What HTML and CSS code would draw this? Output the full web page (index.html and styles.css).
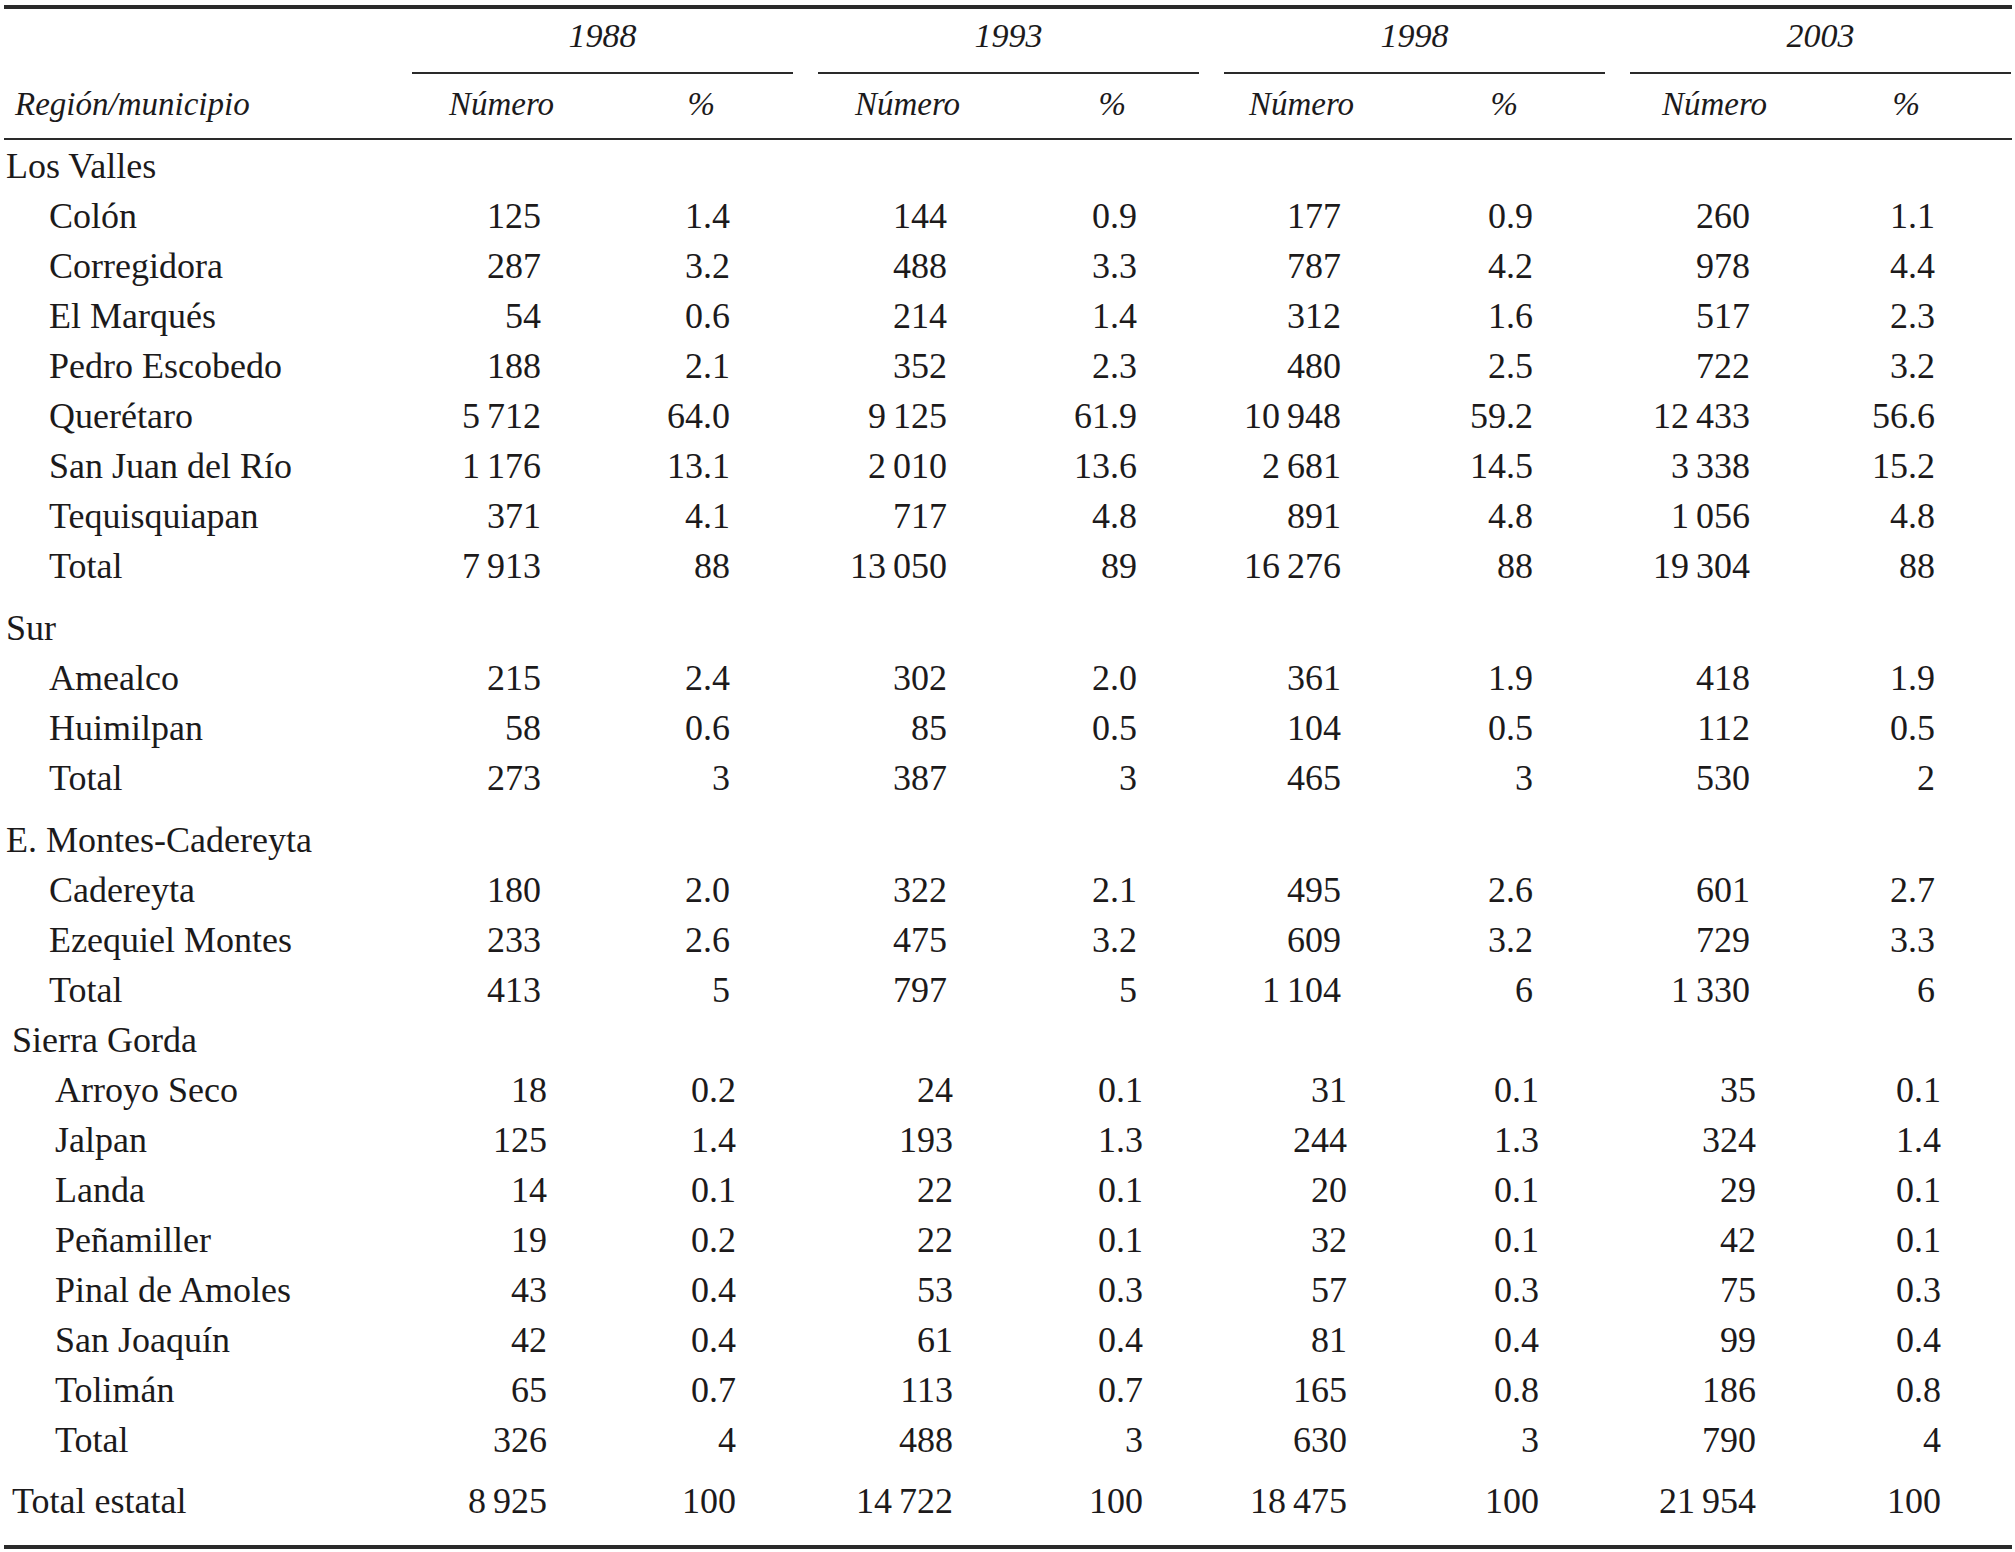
FILE: index.html
```html
<!DOCTYPE html>
<html lang="es">
<head>
<meta charset="utf-8">
<title>Región/municipio</title>
<link rel="stylesheet" href="styles.css">
</head>
<body>
<div class="tabla">
  <div class="years">
    <div class="blank"></div>
    <div class="year">1988</div>
    <div class="year">1993</div>
    <div class="year">1998</div>
    <div class="year">2003</div>
  </div>
  <div class="row head">
    <div class="lbl hl">Región/municipio</div>
    <div class="hn">Número</div><div class="hp">%</div>
    <div class="hn">Número</div><div class="hp p2">%</div>
    <div class="hn">Número</div><div class="hp">%</div>
    <div class="hn n4">Número</div><div class="hp">%</div>
  </div>
  <div class="body">
    <div class="grp">
      <div class="row"><div class="lbl reg">Los Valles</div></div>
      <div class="row"><div class="lbl sub">Colón</div><div class="n">125</div><div class="n">1.4</div><div class="n">144</div><div class="n">0.9</div><div class="n">177</div><div class="n">0.9</div><div class="n">260</div><div class="n">1.1</div></div>
      <div class="row"><div class="lbl sub">Corregidora</div><div class="n">287</div><div class="n">3.2</div><div class="n">488</div><div class="n">3.3</div><div class="n">787</div><div class="n">4.2</div><div class="n">978</div><div class="n">4.4</div></div>
      <div class="row"><div class="lbl sub">El Marqués</div><div class="n">54</div><div class="n">0.6</div><div class="n">214</div><div class="n">1.4</div><div class="n">312</div><div class="n">1.6</div><div class="n">517</div><div class="n">2.3</div></div>
      <div class="row"><div class="lbl sub">Pedro Escobedo</div><div class="n">188</div><div class="n">2.1</div><div class="n">352</div><div class="n">2.3</div><div class="n">480</div><div class="n">2.5</div><div class="n">722</div><div class="n">3.2</div></div>
      <div class="row"><div class="lbl sub">Querétaro</div><div class="n">5 712</div><div class="n">64.0</div><div class="n">9 125</div><div class="n">61.9</div><div class="n">10 948</div><div class="n">59.2</div><div class="n">12 433</div><div class="n">56.6</div></div>
      <div class="row"><div class="lbl sub">San Juan del Río</div><div class="n">1 176</div><div class="n">13.1</div><div class="n">2 010</div><div class="n">13.6</div><div class="n">2 681</div><div class="n">14.5</div><div class="n">3 338</div><div class="n">15.2</div></div>
      <div class="row"><div class="lbl sub">Tequisquiapan</div><div class="n">371</div><div class="n">4.1</div><div class="n">717</div><div class="n">4.8</div><div class="n">891</div><div class="n">4.8</div><div class="n">1 056</div><div class="n">4.8</div></div>
      <div class="row"><div class="lbl sub">Total</div><div class="n">7 913</div><div class="n">88</div><div class="n">13 050</div><div class="n">89</div><div class="n">16 276</div><div class="n">88</div><div class="n">19 304</div><div class="n">88</div></div>
    </div>
    <div class="grp gap">
      <div class="row"><div class="lbl reg">Sur</div></div>
      <div class="row"><div class="lbl sub">Amealco</div><div class="n">215</div><div class="n">2.4</div><div class="n">302</div><div class="n">2.0</div><div class="n">361</div><div class="n">1.9</div><div class="n">418</div><div class="n">1.9</div></div>
      <div class="row"><div class="lbl sub">Huimilpan</div><div class="n">58</div><div class="n">0.6</div><div class="n">85</div><div class="n">0.5</div><div class="n">104</div><div class="n">0.5</div><div class="n">112</div><div class="n">0.5</div></div>
      <div class="row"><div class="lbl sub">Total</div><div class="n">273</div><div class="n">3</div><div class="n">387</div><div class="n">3</div><div class="n">465</div><div class="n">3</div><div class="n">530</div><div class="n">2</div></div>
    </div>
    <div class="grp gap">
      <div class="row"><div class="lbl reg">E. Montes-Cadereyta</div></div>
      <div class="row"><div class="lbl sub">Cadereyta</div><div class="n">180</div><div class="n">2.0</div><div class="n">322</div><div class="n">2.1</div><div class="n">495</div><div class="n">2.6</div><div class="n">601</div><div class="n">2.7</div></div>
      <div class="row"><div class="lbl sub">Ezequiel Montes</div><div class="n">233</div><div class="n">2.6</div><div class="n">475</div><div class="n">3.2</div><div class="n">609</div><div class="n">3.2</div><div class="n">729</div><div class="n">3.3</div></div>
      <div class="row"><div class="lbl sub">Total</div><div class="n">413</div><div class="n">5</div><div class="n">797</div><div class="n">5</div><div class="n">1 104</div><div class="n">6</div><div class="n">1 330</div><div class="n">6</div></div>
    </div>
    <div class="grp shift">
      <div class="row"><div class="lbl reg">Sierra Gorda</div></div>
      <div class="row"><div class="lbl sub">Arroyo Seco</div><div class="n">18</div><div class="n">0.2</div><div class="n">24</div><div class="n">0.1</div><div class="n">31</div><div class="n">0.1</div><div class="n">35</div><div class="n">0.1</div></div>
      <div class="row"><div class="lbl sub">Jalpan</div><div class="n">125</div><div class="n">1.4</div><div class="n">193</div><div class="n">1.3</div><div class="n">244</div><div class="n">1.3</div><div class="n">324</div><div class="n">1.4</div></div>
      <div class="row"><div class="lbl sub">Landa</div><div class="n">14</div><div class="n">0.1</div><div class="n">22</div><div class="n">0.1</div><div class="n">20</div><div class="n">0.1</div><div class="n">29</div><div class="n">0.1</div></div>
      <div class="row"><div class="lbl sub">Peñamiller</div><div class="n">19</div><div class="n">0.2</div><div class="n">22</div><div class="n">0.1</div><div class="n">32</div><div class="n">0.1</div><div class="n">42</div><div class="n">0.1</div></div>
      <div class="row"><div class="lbl sub">Pinal de Amoles</div><div class="n">43</div><div class="n">0.4</div><div class="n">53</div><div class="n">0.3</div><div class="n">57</div><div class="n">0.3</div><div class="n">75</div><div class="n">0.3</div></div>
      <div class="row"><div class="lbl sub">San Joaquín</div><div class="n">42</div><div class="n">0.4</div><div class="n">61</div><div class="n">0.4</div><div class="n">81</div><div class="n">0.4</div><div class="n">99</div><div class="n">0.4</div></div>
      <div class="row"><div class="lbl sub">Tolimán</div><div class="n">65</div><div class="n">0.7</div><div class="n">113</div><div class="n">0.7</div><div class="n">165</div><div class="n">0.8</div><div class="n">186</div><div class="n">0.8</div></div>
      <div class="row"><div class="lbl sub">Total</div><div class="n">326</div><div class="n">4</div><div class="n">488</div><div class="n">3</div><div class="n">630</div><div class="n">3</div><div class="n">790</div><div class="n">4</div></div>
    </div>
    <div class="grp shift final">
      <div class="row"><div class="lbl reg">Total estatal</div><div class="n">8 925</div><div class="n">100</div><div class="n">14 722</div><div class="n">100</div><div class="n">18 475</div><div class="n">100</div><div class="n">21 954</div><div class="n">100</div></div>
    </div>
  </div>
</div>
</body>
</html>
```

FILE: styles.css
```css
html, body {
  margin: 0;
  padding: 0;
  background: #ffffff;
}

body {
  font-family: "Liberation Serif", "Times New Roman", serif;
  color: #1c1a1b;
}

.tabla {
  width: 2008px;
  margin: 5px 0 0 4px;
  border-top: 4px solid #2a2a2a;
  border-bottom: 4px solid #2a2a2a;
  padding-bottom: 19px;
}

.years {
  display: grid;
  grid-template-columns: 383px repeat(4, 381px);
  column-gap: 25px;
  padding-top: 7px;
}

.year {
  font-style: italic;
  font-size: 34px;
  line-height: 40px;
  text-align: center;
  padding-bottom: 16px;
  border-bottom: 2px solid #2a2a2a;
}

.row {
  display: grid;
  grid-template-columns: 427px 110px 189px 217px 190px 204px 192px 217px 185px;
  font-size: 36px;
  line-height: 50px;
  white-space: nowrap;
}

.head {
  font-style: italic;
  font-size: 33px;
  line-height: 40px;
  padding: 10px 0 14px;
  border-bottom: 2px solid #2a2a2a;
}

.hl {
  padding-left: 11px;
}

.hn {
  text-align: right;
  margin-right: -13px;
}

.hn.n4 {
  margin-right: -17px;
}

.hp {
  text-align: right;
  padding-right: 15px;
}

.hp.p2 {
  padding-right: 11px;
}

.body {
  padding-top: 1px;
}

.grp.gap {
  margin-top: 12px;
}

.grp.shift {
  margin-left: 6px;
}

.grp.final {
  margin-top: 11px;
}

.lbl.reg {
  padding-left: 2px;
}

.lbl.sub {
  padding-left: 45px;
}

.n {
  text-align: right;
  word-spacing: -2px;
}
```
